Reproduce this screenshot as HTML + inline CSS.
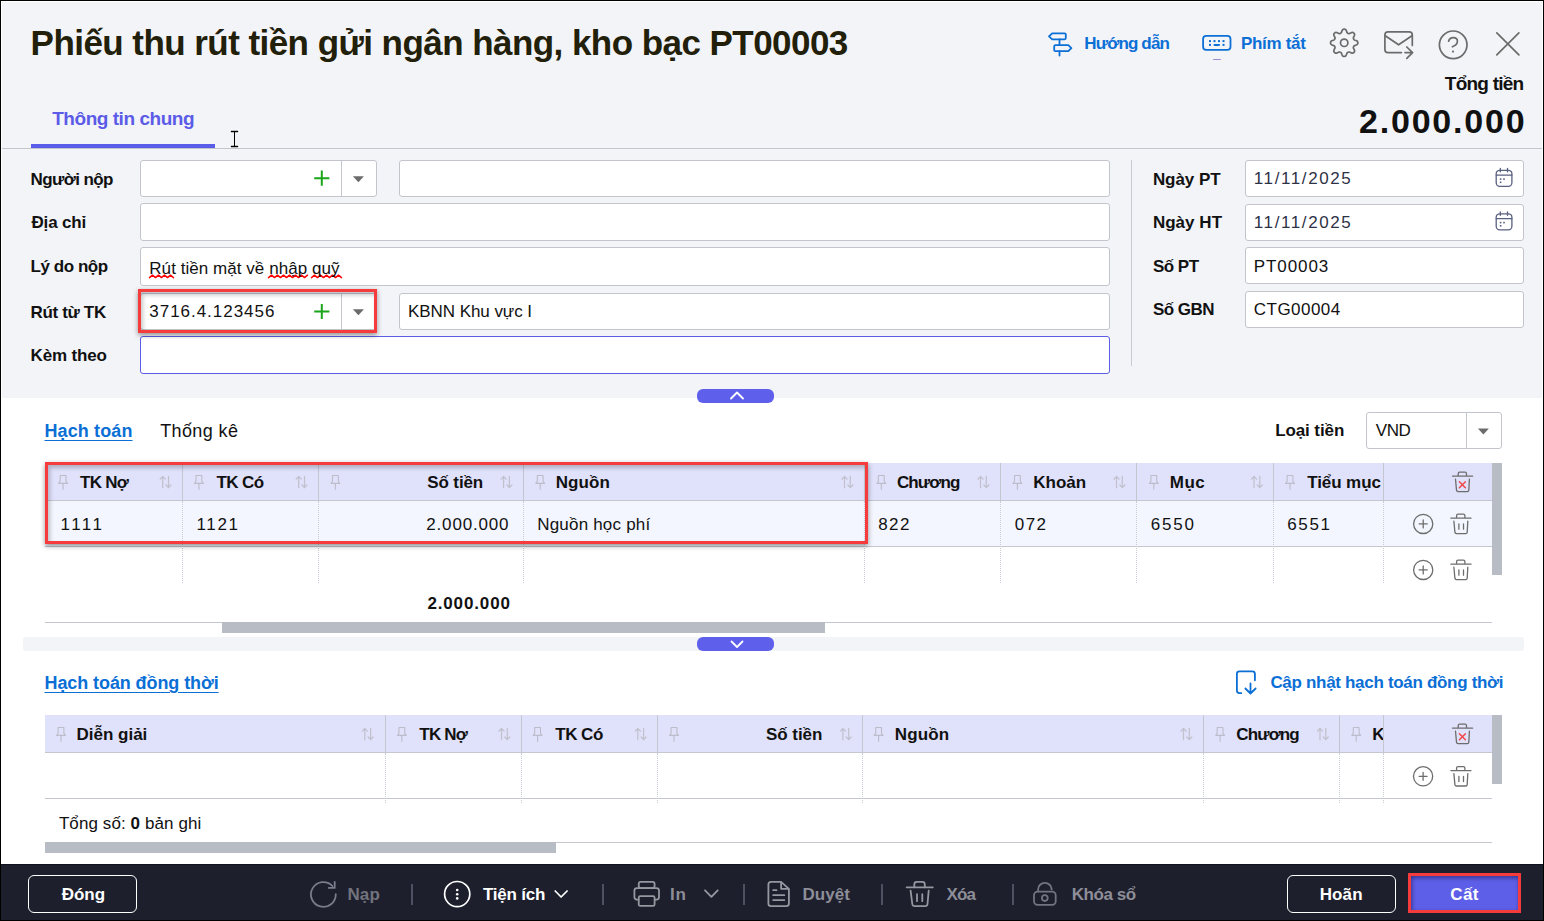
<!DOCTYPE html>
<html lang="vi"><head><meta charset="utf-8"><title>Phiếu thu</title>
<style>
*{box-sizing:border-box;margin:0;padding:0}
html,body{width:1544px;height:921px;overflow:hidden;background:#000;font-family:"Liberation Sans",sans-serif;color:#111}
.a{position:absolute}
.t{position:absolute;white-space:nowrap}
.inp{position:absolute;background:#fff;border:1px solid #c3c5cd;border-radius:3px}
.hl{position:absolute;height:1px;background:#c4c7d0}
.vl{position:absolute;width:1px;background:#c4c7d0}
.dl{position:absolute;width:0;border-left:1px dotted #c9ccd4}
svg{position:absolute;left:0;top:0;overflow:visible}
</style></head><body>
<div class="a" style="left:1px;top:1px;width:1542px;height:919px;background:#fff"></div>
<div class="a" style="left:2px;top:2px;width:1540px;height:396px;background:#f3f4f8"></div>
<!-- tab line -->
<div class="hl" style="left:2px;top:148px;width:1540px;background:#c5c7cf"></div>
<div class="a" style="left:31px;top:144px;width:184px;height:4px;background:#5b5ce8"></div>

<!-- form inputs left -->
<div class="inp" style="left:140px;top:160px;width:237px;height:37px"></div>
<div class="vl" style="left:341px;top:161px;height:35px"></div>
<div class="inp" style="left:399px;top:160px;width:711px;height:37px"></div>
<div class="inp" style="left:140px;top:203px;width:970px;height:38px"></div>
<div class="inp" style="left:140px;top:247px;width:970px;height:39px"></div>
<div class="inp" style="left:140px;top:293px;width:237px;height:37px"></div>
<div class="vl" style="left:341px;top:294px;height:35px"></div>
<div class="inp" style="left:399px;top:293px;width:711px;height:37px"></div>
<div class="inp" style="left:140px;top:336px;width:970px;height:38px;border-color:#5b5ce8"></div>
<div class="a" style="left:138px;top:289px;width:239px;height:44px;border:3px solid #f53b3b;box-shadow:0 2px 5px rgba(0,0,0,.42),inset 2px 3px 4px rgba(0,0,0,.22)"></div>
<!-- right column -->
<div class="vl" style="left:1131px;top:160px;height:206px;background:#c9cbd2"></div>
<div class="inp" style="left:1245px;top:160px;width:279px;height:37px"></div>
<div class="inp" style="left:1245px;top:204px;width:279px;height:37px"></div>
<div class="inp" style="left:1245px;top:247px;width:279px;height:37px"></div>
<div class="inp" style="left:1245px;top:291px;width:279px;height:37px"></div>

<!-- collapse buttons -->
<div class="a" style="left:697px;top:389px;width:77px;height:14px;border-radius:6px;background:#5e60ec"></div>
<div class="a" style="left:23px;top:637px;width:1501px;height:14px;border-radius:3px;background:#f3f4f8"></div>
<div class="a" style="left:697px;top:637px;width:77px;height:14px;border-radius:6px;background:#5e60ec"></div>

<!-- loai tien select -->
<div class="inp" style="left:1366px;top:412px;width:136px;height:37px"></div>
<div class="vl" style="left:1466px;top:413px;height:35px"></div>

<!-- table 1 -->
<div class="a" style="left:45px;top:463px;width:1447px;height:37px;background:#e0e1fb"></div>
<div class="hl" style="left:45px;top:500px;width:1447px"></div>
<div class="a" style="left:45px;top:501px;width:1447px;height:45px;background:#f3f6fe"></div>
<div class="hl" style="left:45px;top:546px;width:1447px"></div>
<div class="vl" style="left:182px;top:463px;height:37px"></div>
<div class="dl" style="left:182px;top:501px;height:82px"></div>
<div class="vl" style="left:318px;top:463px;height:37px"></div>
<div class="dl" style="left:318px;top:501px;height:82px"></div>
<div class="vl" style="left:523px;top:463px;height:37px"></div>
<div class="dl" style="left:523px;top:501px;height:82px"></div>
<div class="vl" style="left:864px;top:463px;height:37px"></div>
<div class="dl" style="left:864px;top:501px;height:82px"></div>
<div class="vl" style="left:1000px;top:463px;height:37px"></div>
<div class="dl" style="left:1000px;top:501px;height:82px"></div>
<div class="vl" style="left:1136px;top:463px;height:37px"></div>
<div class="dl" style="left:1136px;top:501px;height:82px"></div>
<div class="vl" style="left:1273px;top:463px;height:37px"></div>
<div class="dl" style="left:1273px;top:501px;height:82px"></div>
<div class="vl" style="left:1383px;top:463px;height:37px"></div>
<div class="dl" style="left:1383px;top:501px;height:82px"></div>
<div class="hl" style="left:45px;top:622px;width:1447px"></div>
<div class="a" style="left:222px;top:622px;width:603px;height:11px;background:#b8bcc5"></div>
<div class="a" style="left:1492px;top:463px;width:10px;height:112px;background:#b8bcc5"></div>
<div class="a" style="left:45px;top:462px;width:823px;height:82px;border:3px solid #f53b3b;box-shadow:0 2px 5px rgba(0,0,0,.42),inset 2px 3px 4px rgba(0,0,0,.22)"></div>

<!-- table 2 -->
<div class="a" style="left:45px;top:715px;width:1447px;height:37px;background:#e0e1fb"></div>
<div class="hl" style="left:45px;top:752px;width:1447px"></div>
<div class="hl" style="left:45px;top:798px;width:1447px"></div>
<div class="vl" style="left:385px;top:715px;height:37px"></div>
<div class="dl" style="left:385px;top:753px;height:50px"></div>
<div class="vl" style="left:521px;top:715px;height:37px"></div>
<div class="dl" style="left:521px;top:753px;height:50px"></div>
<div class="vl" style="left:657px;top:715px;height:37px"></div>
<div class="dl" style="left:657px;top:753px;height:50px"></div>
<div class="vl" style="left:862px;top:715px;height:37px"></div>
<div class="dl" style="left:862px;top:753px;height:50px"></div>
<div class="vl" style="left:1203px;top:715px;height:37px"></div>
<div class="dl" style="left:1203px;top:753px;height:50px"></div>
<div class="vl" style="left:1339px;top:715px;height:37px"></div>
<div class="dl" style="left:1339px;top:753px;height:50px"></div>
<div class="vl" style="left:1383px;top:715px;height:37px"></div>
<div class="dl" style="left:1383px;top:753px;height:50px"></div>
<div class="a" style="left:1492px;top:715px;width:10px;height:69px;background:#b8bcc5"></div>
<div class="hl" style="left:45px;top:842px;width:1447px"></div>
<div class="a" style="left:45px;top:842px;width:511px;height:11px;background:#b8bcc5"></div>

<!-- footer -->
<div class="a" style="left:1px;top:864px;width:1542px;height:1px;background:#10121c;z-index:1"></div>
<div class="a" style="left:1px;top:864px;width:1542px;height:56px;background:#1d1f2d"></div>
<div class="a" style="left:28px;top:875px;width:109px;height:38px;border:1.5px solid #fff;border-radius:6px"></div>
<div class="a" style="left:1287px;top:875px;width:109px;height:38px;border:1.5px solid #fff;border-radius:6px"></div>
<div class="a" style="left:1408px;top:873px;width:113px;height:40px;border:3px solid #f53b3b;background:#5e5fe8;box-shadow:inset 1px 2px 4px rgba(0,0,30,.45)"></div>
<div class="a" style="left:411px;top:884px;width:2px;height:21px;background:#4f5162"></div>
<div class="a" style="left:602px;top:884px;width:2px;height:21px;background:#4f5162"></div>
<div class="a" style="left:743px;top:884px;width:2px;height:21px;background:#4f5162"></div>
<div class="a" style="left:881px;top:884px;width:2px;height:21px;background:#4f5162"></div>
<div class="a" style="left:1012px;top:884px;width:2px;height:21px;background:#4f5162"></div>

<svg width="1544" height="921" viewBox="0 0 1544 921" fill="none" stroke-linecap="round" stroke-linejoin="round">
 <!-- signpost -->
 <g stroke="#0b6fd6" stroke-width="1.8">
  <path d="M1049,36.4 L1052.2,33.3 H1064.6 Q1065.8,33.3 1065.8,34.5 V38.1 Q1065.8,39.3 1064.6,39.3 H1052.2 Z"/>
  <path d="M1059.5,39.5 V45"/>
  <path d="M1055.4,45.2 H1068.3 L1071.4,48.1 L1068.3,51.1 H1055.4 Q1054.2,51.1 1054.2,49.9 V46.4 Q1054.2,45.2 1055.4,45.2 Z"/>
  <path d="M1059.5,51.2 V55.5"/>
  <rect x="1203.1" y="35.8" width="27.4" height="14.1" rx="3.2"/>
 </g>
 <g fill="#0b6fd6">
  <rect x="1209" y="40.1" width="2" height="2"/><rect x="1213.5" y="40.1" width="2" height="2"/><rect x="1218" y="40.1" width="2" height="2"/><rect x="1222.5" y="40.1" width="2" height="2"/>
  <rect x="1209" y="43.9" width="2" height="2"/><rect x="1213.5" y="43.9" width="6.5" height="2" rx="0.8"/><rect x="1222.5" y="43.9" width="2" height="2"/>
 </g>
 <path d="M1213.5,59.5 H1220.5" stroke="#8a70c0" stroke-width="1" opacity=".8"/>
 <!-- gear, mail, help, close -->
 <g stroke="#6b6b6b" stroke-width="1.7">
  <path d="M1344.2,29.1 L1344.7,29.2 L1345.3,29.4 L1345.8,29.7 L1346.2,30.3 L1346.5,31.1 L1346.8,32.0 L1347.1,32.6 L1347.4,33.0 L1347.7,33.2 L1348.1,33.4 L1348.5,33.6 L1348.9,33.6 L1349.4,33.6 L1350.0,33.3 L1350.8,32.9 L1351.6,32.5 L1352.4,32.4 L1353.0,32.5 L1353.4,32.8 L1353.9,33.1 L1354.2,33.6 L1354.5,34.0 L1354.6,34.6 L1354.5,35.4 L1354.1,36.2 L1353.7,37.0 L1353.4,37.6 L1353.4,38.1 L1353.4,38.5 L1353.6,38.9 L1353.8,39.3 L1354.0,39.6 L1354.4,39.9 L1355.0,40.2 L1355.9,40.5 L1356.7,40.8 L1357.3,41.2 L1357.6,41.7 L1357.8,42.3 L1357.9,42.8 L1357.8,43.3 L1357.6,43.9 L1357.3,44.4 L1356.7,44.8 L1355.9,45.1 L1355.0,45.4 L1354.4,45.7 L1354.0,46.0 L1353.8,46.3 L1353.6,46.7 L1353.4,47.1 L1353.4,47.5 L1353.4,48.0 L1353.7,48.6 L1354.1,49.4 L1354.5,50.2 L1354.6,51.0 L1354.5,51.6 L1354.2,52.0 L1353.9,52.5 L1353.4,52.8 L1353.0,53.1 L1352.4,53.2 L1351.6,53.1 L1350.8,52.7 L1350.0,52.3 L1349.4,52.0 L1348.9,52.0 L1348.5,52.0 L1348.1,52.2 L1347.7,52.4 L1347.4,52.6 L1347.1,53.0 L1346.8,53.6 L1346.5,54.5 L1346.2,55.3 L1345.8,55.9 L1345.3,56.2 L1344.7,56.4 L1344.2,56.4 L1343.7,56.4 L1343.1,56.2 L1342.6,55.9 L1342.2,55.3 L1341.9,54.5 L1341.6,53.6 L1341.3,53.0 L1341.0,52.6 L1340.7,52.4 L1340.3,52.2 L1339.9,52.0 L1339.5,52.0 L1339.0,52.0 L1338.4,52.3 L1337.6,52.7 L1336.8,53.1 L1336.0,53.2 L1335.4,53.1 L1335.0,52.8 L1334.5,52.5 L1334.2,52.0 L1333.9,51.6 L1333.8,51.0 L1333.9,50.2 L1334.3,49.4 L1334.7,48.6 L1335.0,48.0 L1335.0,47.5 L1335.0,47.1 L1334.8,46.7 L1334.6,46.3 L1334.4,46.0 L1334.0,45.7 L1333.4,45.4 L1332.5,45.1 L1331.7,44.8 L1331.1,44.4 L1330.8,43.9 L1330.6,43.3 L1330.5,42.8 L1330.6,42.3 L1330.8,41.7 L1331.1,41.2 L1331.7,40.8 L1332.5,40.5 L1333.4,40.2 L1334.0,39.9 L1334.4,39.6 L1334.6,39.3 L1334.8,38.9 L1335.0,38.5 L1335.0,38.1 L1335.0,37.6 L1334.7,37.0 L1334.3,36.2 L1333.9,35.4 L1333.8,34.6 L1333.9,34.0 L1334.2,33.6 L1334.5,33.1 L1335.0,32.8 L1335.4,32.5 L1336.0,32.4 L1336.8,32.5 L1337.6,32.9 L1338.4,33.3 L1339.0,33.6 L1339.5,33.6 L1339.9,33.6 L1340.3,33.4 L1340.7,33.2 L1341.0,33.0 L1341.3,32.6 L1341.6,32.0 L1341.9,31.1 L1342.2,30.3 L1342.6,29.7 L1343.1,29.4 L1343.7,29.2Z"/>
  <circle cx="1344.2" cy="42.8" r="3.7"/>
  <path d="M1401.4,52.6 H1388 Q1384.9,52.6 1384.9,49.5 V35 Q1384.9,31.9 1388,31.9 H1409.2 Q1412.3,31.9 1412.3,35 V45.5"/>
  <path d="M1385.6,36 L1398.6,44.8 L1411.6,36"/>
  <path d="M1405,52.6 H1412.6 M1406.8,47 L1412.6,52.6 L1406.8,58.3"/>
  <circle cx="1453.2" cy="44.8" r="13.8"/>
  <path d="M1448.6,41.2 Q1449.6,37.6 1453.4,37.6 Q1457.4,37.6 1457.4,41.3 Q1457.4,44.9 1452.4,46.8" />
  <path d="M1496.8,32.8 L1518.9,54.9 M1518.9,32.8 L1496.8,54.9"/>
 </g>
 <circle cx="1453" cy="51.6" r="1.1" fill="#6b6b6b"/>
 <!-- combo plus & triangles -->
 <g stroke="#1ba51b" stroke-width="2" stroke-linecap="butt">
  <path d="M314.2,178.2 H329.4 M321.8,170.6 V185.8"/>
  <path d="M314.2,311.5 H329.4 M321.8,303.9 V319.1"/>
 </g>
 <g fill="#6b6b6b">
  <path d="M352.9,176.3 H363.9 L358.4,182.3 Z"/>
  <path d="M352.9,309.3 H363.9 L358.4,315.3 Z"/>
  <path d="M1477.9,428.5 H1488.9 L1483.4,434.5 Z"/>
 </g>
 <!-- calendars -->
 <g stroke="#5a6080" stroke-width="1.3">
  <rect x="1496.2" y="170.3" width="15.7" height="16" rx="3.5"/>
  <path d="M1496.2,175.1 H1511.9 M1500.3,168.3 V171.8 M1507.5,168.3 V171.8"/>
  <rect x="1496.2" y="213.8" width="15.7" height="16" rx="3.5"/>
  <path d="M1496.2,218.6 H1511.9 M1500.3,211.8 V215.3 M1507.5,211.8 V215.3"/>
 </g>
 <g fill="#5a6080">
  <rect x="1499.8" y="178.3" width="1.6" height="1.6"/><rect x="1503.2" y="178.3" width="1.6" height="1.6"/><rect x="1499.8" y="181.5" width="1.6" height="1.6"/>
  <rect x="1499.8" y="221.8" width="1.6" height="1.6"/><rect x="1503.2" y="221.8" width="1.6" height="1.6"/><rect x="1499.8" y="225" width="1.6" height="1.6"/>
 </g>
 <!-- chevrons -->
 <g stroke="#fff" stroke-width="1.8">
  <path d="M731,398.5 L737,392.5 L743,398.5"/>
  <path d="M731.5,641.5 L737,647 L742.5,641.5"/>
 </g>
 <g stroke="#bcbdc9" stroke-width="1.1">
<path d="M58.7,483.4 H67.5 L66.0,481.2 V475.5 H60.2 V481.2 Z M63.1,483.4 V489.3"/>
<path d="M194.5,483.4 H203.3 L201.8,481.2 V475.5 H196.0 V481.2 Z M198.9,483.4 V489.3"/>
<path d="M331.0,483.4 H339.8 L338.3,481.2 V475.5 H332.5 V481.2 Z M335.4,483.4 V489.3"/>
<path d="M535.8,483.4 H544.6 L543.1,481.2 V475.5 H537.3 V481.2 Z M540.2,483.4 V489.3"/>
<path d="M876.9,483.4 H885.7 L884.2,481.2 V475.5 H878.4 V481.2 Z M881.3,483.4 V489.3"/>
<path d="M1013.0,483.4 H1021.8 L1020.3,481.2 V475.5 H1014.5 V481.2 Z M1017.4,483.4 V489.3"/>
<path d="M1149.4,483.4 H1158.2 L1156.7,481.2 V475.5 H1150.9 V481.2 Z M1153.8,483.4 V489.3"/>
<path d="M1285.6,483.4 H1294.4 L1292.9,481.2 V475.5 H1287.1 V481.2 Z M1290.0,483.4 V489.3"/>
</g><g stroke="#c0c1cc" stroke-width="1.2">
<path d="M162.7,476.5 V487.7 M160.2,479.2 L162.7,476.5 L165.3,479.2 M168.5,476.3 V487.7 M166.0,485.0 L168.5,487.7 L171.0,485.0"/>
<path d="M298.7,476.5 V487.7 M296.2,479.2 L298.7,476.5 L301.3,479.2 M304.5,476.3 V487.7 M302.0,485.0 L304.5,487.7 L307.0,485.0"/>
<path d="M503.6,476.5 V487.7 M501.1,479.2 L503.6,476.5 L506.2,479.2 M509.4,476.3 V487.7 M506.9,485.0 L509.4,487.7 L511.9,485.0"/>
<path d="M844.5,476.5 V487.7 M842.0,479.2 L844.5,476.5 L847.1,479.2 M850.3,476.3 V487.7 M847.8,485.0 L850.3,487.7 L852.8,485.0"/>
<path d="M980.5,476.5 V487.7 M978.0,479.2 L980.5,476.5 L983.1,479.2 M986.3,476.3 V487.7 M983.8,485.0 L986.3,487.7 L988.8,485.0"/>
<path d="M1116.5,476.5 V487.7 M1114.0,479.2 L1116.5,476.5 L1119.1,479.2 M1122.3,476.3 V487.7 M1119.8,485.0 L1122.3,487.7 L1124.8,485.0"/>
<path d="M1254.0,476.5 V487.7 M1251.5,479.2 L1254.0,476.5 L1256.6,479.2 M1259.8,476.3 V487.7 M1257.3,485.0 L1259.8,487.7 L1262.3,485.0"/>
</g>
<g stroke="#6d6d6d" stroke-width="1.3"><path d="M1452.5,476.2 H1472.6 M1458.2,476.2 V473.7 Q1458.2,472.2 1459.7,472.2 H1465.0 Q1466.5,472.2 1466.5,473.7 V476.2 M1455.5,479.2 L1456.5,490.2 Q1456.7,491.6 1458.1,491.6 H1467.3 Q1468.7,491.6 1468.8,490.2 L1469.4,479.2"/></g><path stroke="#f04848" stroke-width="1.5" d="M1459.4,481.7 L1465.4,487.7 M1465.4,481.7 L1459.4,487.7"/>
<g stroke="#6d6d6d" stroke-width="1.3"><circle cx="1423.2" cy="523.9" r="9.6"/><path d="M1419.2,523.9 H1427.2 M1423.2,519.9 V527.9"/></g>
<g stroke="#6d6d6d" stroke-width="1.3"><path d="M1450.9,518.2 H1471.0 M1456.6,518.2 V515.7 Q1456.6,514.2 1458.1,514.2 H1463.4 Q1464.9,514.2 1464.9,515.7 V518.2 M1453.9,521.2 L1454.9,532.2 Q1455.1,533.6 1456.5,533.6 H1465.7 Q1467.1,533.6 1467.2,532.2 L1467.8,521.2"/></g><path stroke="#6d6d6d" stroke-width="1.3" d="M1458.9,523.9 V529.2 M1463.5,523.9 V529.2"/>
<g stroke="#6d6d6d" stroke-width="1.3"><circle cx="1423.2" cy="569.9" r="9.6"/><path d="M1419.2,569.9 H1427.2 M1423.2,565.9 V573.9"/></g>
<g stroke="#6d6d6d" stroke-width="1.3"><path d="M1450.9,564.2 H1471.0 M1456.6,564.2 V561.7 Q1456.6,560.2 1458.1,560.2 H1463.4 Q1464.9,560.2 1464.9,561.7 V564.2 M1453.9,567.2 L1454.9,578.2 Q1455.1,579.6 1456.5,579.6 H1465.7 Q1467.1,579.6 1467.2,578.2 L1467.8,567.2"/></g><path stroke="#6d6d6d" stroke-width="1.3" d="M1458.9,569.9 V575.2 M1463.5,569.9 V575.2"/>
 <g stroke="#bcbdc9" stroke-width="1.1">
<path d="M56.6,735.4 H65.4 L63.9,733.2 V727.5 H58.1 V733.2 Z M61.0,735.4 V741.3"/>
<path d="M397.4,735.4 H406.2 L404.7,733.2 V727.5 H398.9 V733.2 Z M401.8,735.4 V741.3"/>
<path d="M533.2,735.4 H542.0 L540.5,733.2 V727.5 H534.7 V733.2 Z M537.6,735.4 V741.3"/>
<path d="M669.6,735.4 H678.4 L676.9,733.2 V727.5 H671.1 V733.2 Z M674.0,735.4 V741.3"/>
<path d="M874.2,735.4 H883.0 L881.5,733.2 V727.5 H875.7 V733.2 Z M878.6,735.4 V741.3"/>
<path d="M1215.7,735.4 H1224.5 L1223.0,733.2 V727.5 H1217.2 V733.2 Z M1220.1,735.4 V741.3"/>
<path d="M1351.8,735.4 H1360.6 L1359.1,733.2 V727.5 H1353.3 V733.2 Z M1356.2,735.4 V741.3"/>
</g><g stroke="#c0c1cc" stroke-width="1.2">
<path d="M364.8,728.5 V739.7 M362.3,731.2 L364.8,728.5 L367.4,731.2 M370.6,728.3 V739.7 M368.1,737.0 L370.6,739.7 L373.1,737.0"/>
<path d="M501.5,728.5 V739.7 M499.0,731.2 L501.5,728.5 L504.1,731.2 M507.3,728.3 V739.7 M504.8,737.0 L507.3,739.7 L509.8,737.0"/>
<path d="M637.8,728.5 V739.7 M635.3,731.2 L637.8,728.5 L640.4,731.2 M643.6,728.3 V739.7 M641.1,737.0 L643.6,739.7 L646.1,737.0"/>
<path d="M842.9,728.5 V739.7 M840.4,731.2 L842.9,728.5 L845.5,731.2 M848.7,728.3 V739.7 M846.2,737.0 L848.7,739.7 L851.2,737.0"/>
<path d="M1183.5,728.5 V739.7 M1181.0,731.2 L1183.5,728.5 L1186.1,731.2 M1189.3,728.3 V739.7 M1186.8,737.0 L1189.3,739.7 L1191.8,737.0"/>
<path d="M1320.0,728.5 V739.7 M1317.5,731.2 L1320.0,728.5 L1322.6,731.2 M1325.8,728.3 V739.7 M1323.3,737.0 L1325.8,739.7 L1328.3,737.0"/>
</g>
<g stroke="#6d6d6d" stroke-width="1.3"><path d="M1452.5,728.2 H1472.6 M1458.2,728.2 V725.7 Q1458.2,724.2 1459.7,724.2 H1465.0 Q1466.5,724.2 1466.5,725.7 V728.2 M1455.5,731.2 L1456.5,742.2 Q1456.7,743.6 1458.1,743.6 H1467.3 Q1468.7,743.6 1468.8,742.2 L1469.4,731.2"/></g><path stroke="#f04848" stroke-width="1.5" d="M1459.4,733.7 L1465.4,739.7 M1465.4,733.7 L1459.4,739.7"/>
<g stroke="#6d6d6d" stroke-width="1.3"><circle cx="1423.1" cy="776.3" r="9.6"/><path d="M1419.1,776.3 H1427.1 M1423.1,772.3 V780.3"/></g>
<g stroke="#6d6d6d" stroke-width="1.3"><path d="M1450.9,770.6 H1471.0 M1456.6,770.6 V768.1 Q1456.6,766.6 1458.1,766.6 H1463.4 Q1464.9,766.6 1464.9,768.1 V770.6 M1453.9,773.6 L1454.9,784.6 Q1455.1,786.0 1456.5,786.0 H1465.7 Q1467.1,786.0 1467.2,784.6 L1467.8,773.6"/></g><path stroke="#6d6d6d" stroke-width="1.3" d="M1458.9,776.3 V781.6 M1463.5,776.3 V781.6"/>
 <!-- cap nhat icon -->
 <g stroke="#0b6fd6" stroke-width="1.8">
  <path d="M1241.3,693.1 H1239.4 Q1236.9,693.1 1236.9,690.6 V673.8 Q1236.9,671.3 1239.4,671.3 H1252.4 Q1254.9,671.3 1254.9,673.8 V680.3"/>
  <path d="M1250.5,683.4 V693.3 M1245.4,688.5 L1250.5,693.5 L1255.6,688.5"/>
 </g>
 <!-- footer icons -->
 <g stroke="#7a7c8a" stroke-width="1.8">
  <path d="M335.75,894.2 A12.4,12.4 0 1 1 332.4,886"/>
  <path d="M334.7,881.8 V887.9 H328.8"/>
 </g>
 <g stroke="#fff" stroke-width="1.7">
  <circle cx="457.2" cy="894.1" r="12.6"/>
  <path d="M555.2,891 L561.1,897 L567.1,891"/>
 </g>
 <g fill="#fff"><circle cx="457.2" cy="890" r="1.3"/><circle cx="457.2" cy="894.2" r="1.3"/><circle cx="457.2" cy="898.4" r="1.3"/></g>
 <g stroke="#96979f" stroke-width="1.8">
  <rect x="638.75" y="881.9" width="15.85" height="6.2" rx="2"/>
  <path d="M638.5,899.6 H636.9 Q634.4,899.6 634.4,897.1 V890.6 Q634.4,888.1 636.9,888.1 H656.5 Q659,888.1 659,890.6 V897.1 Q659,899.6 656.5,899.6 H654.8"/>
  <rect x="638.75" y="896.2" width="15.85" height="9.7" rx="1.5"/>
  <path d="M705,890.3 L711.4,896.9 L717.7,890.3"/>
  <path d="M781.1,881.9 H771 Q768.4,881.9 768.4,884.5 V903.5 Q768.4,906.1 771,906.1 H786.3 Q788.9,906.1 788.9,903.5 V888.8 Z M781.1,881.9 V888.8 H788.9"/>
  <path d="M773.2,890.2 H776.5 M773.2,895.2 H784.3 M773.2,900.2 H784.3"/>
  <path d="M906.6,887.3 H932.8"/>
  <path d="M914.3,887.3 V884.4 Q914.3,881.9 916.8,881.9 H922.3 Q924.8,881.9 924.8,884.4 V887.3"/>
  <path d="M910.6,890.7 L912.3,904 Q912.6,906.1 914.7,906.1 H925.2 Q927.3,906.1 927.5,904 L928.7,890.7"/>
  <path d="M917,894.2 V901.2 M922.3,894.2 V901.2"/>
 </g>
 <g stroke="#72747f" stroke-width="1.8">
  <rect x="1034" y="891.6" width="21.7" height="13.3" rx="3.6"/>
  <path d="M1038.1,891.4 V889.4 A6.75,6.6 0 0 1 1051.6,889.4 V888.5"/>
  <circle cx="1044.8" cy="898.1" r="2.9"/>
 </g>

 <!-- spell squiggles -->
 <g stroke="#f00" stroke-width="1.5" stroke-linecap="round" stroke-linejoin="round">
  <path d="M149.5,277.6 l3,-2.4 l3,2.4 l3,-2.4 l3,2.4 l3,-2.4 l3,2.4 l3,-2.4 l3,2.4"/>
  <path d="M268.5,277.6 l3,-2.4 l3,2.4 l3,-2.4 l3,2.4 l3,-2.4 l3,2.4 l3,-2.4 l3,2.4 l3,-2.4 l3,2.4 l3,-2.4 l3,2.4 l3,-2.4"/>
  <path d="M311.5,277.6 l3,-2.4 l3,2.4 l3,-2.4 l3,2.4 l3,-2.4 l3,2.4 l3,-2.4 l3,2.4 l3,-2.4 l3,2.4"/>
 </g>
 <!-- I-beam cursor -->
 <g stroke="#fff" stroke-width="3" stroke-linecap="square"><path d="M231,131.5 H238 M234.5,131.5 V146.5 M231,146.5 H238"/></g>
 <g stroke="#000" stroke-width="1.3" stroke-linecap="butt"><path d="M230.8,131.5 H238.2 M230.8,146.5 H238.2"/><path d="M234.5,131.5 V146.5" stroke-width="1.1"/></g>
</svg>
<div class="t" style="left:30.6px;top:25px;font-size:35px;line-height:35px;font-weight:700;color:#22200a;letter-spacing:-0.55px;">Phiếu thu rút tiền gửi ngân hàng, kho bạc PT00003</div>
<div class="t" style="left:1084.3px;top:35px;font-size:17px;line-height:17px;font-weight:700;color:#0b6fd6;letter-spacing:-0.85px;">Hướng dẫn</div>
<div class="t" style="left:1241.0px;top:35px;font-size:17px;line-height:17px;font-weight:700;color:#0b6fd6;letter-spacing:-0.31px;">Phím tắt</div>
<div class="t" style="left:1444.8px;top:74px;font-size:19px;line-height:19px;font-weight:700;color:#111;letter-spacing:-0.76px;">Tổng tiền</div>
<div class="t" style="left:1359.0px;top:104px;font-size:34px;line-height:34px;font-weight:700;color:#111;letter-spacing:1.79px;">2.000.000</div>
<div class="t" style="left:52.2px;top:109px;font-size:19px;line-height:19px;font-weight:700;color:#5b5be8;letter-spacing:-0.46px;">Thông tin chung</div>
<div class="t" style="left:30.6px;top:171px;font-size:17px;line-height:17px;font-weight:700;color:#111;letter-spacing:-0.60px;">Người nộp</div>
<div class="t" style="left:31.5px;top:214px;font-size:17px;line-height:17px;font-weight:700;color:#111;letter-spacing:-0.17px;">Địa chỉ</div>
<div class="t" style="left:30.5px;top:258px;font-size:17px;line-height:17px;font-weight:700;color:#111;letter-spacing:-0.44px;">Lý do nộp</div>
<div class="t" style="left:30.5px;top:304px;font-size:17px;line-height:17px;font-weight:700;color:#111;letter-spacing:-0.34px;">Rút từ TK</div>
<div class="t" style="left:30.5px;top:347px;font-size:17px;line-height:17px;font-weight:700;color:#111;letter-spacing:-0.14px;">Kèm theo</div>
<div class="t" style="left:149.3px;top:260px;font-size:17px;line-height:17px;font-weight:400;color:#111;letter-spacing:0.05px;">Rút tiền mặt về nhập quỹ</div>
<div class="t" style="left:149.3px;top:303px;font-size:17px;line-height:17px;font-weight:400;color:#111;letter-spacing:0.97px;">3716.4.123456</div>
<div class="t" style="left:408.0px;top:303px;font-size:17px;line-height:17px;font-weight:400;color:#111;letter-spacing:-0.06px;">KBNN Khu vực I</div>
<div class="t" style="left:1152.9px;top:171px;font-size:17px;line-height:17px;font-weight:700;color:#111;letter-spacing:-0.05px;">Ngày PT</div>
<div class="t" style="left:1152.9px;top:214px;font-size:17px;line-height:17px;font-weight:700;color:#111;letter-spacing:0.03px;">Ngày HT</div>
<div class="t" style="left:1152.9px;top:258px;font-size:17px;line-height:17px;font-weight:700;color:#111;letter-spacing:-0.50px;">Số PT</div>
<div class="t" style="left:1152.9px;top:301px;font-size:17px;line-height:17px;font-weight:700;color:#111;letter-spacing:-0.52px;">Số GBN</div>
<div class="t" style="left:1253.8px;top:170px;font-size:17px;line-height:17px;font-weight:400;color:#2e3247;letter-spacing:1.60px;">11/11/2025</div>
<div class="t" style="left:1253.8px;top:214px;font-size:17px;line-height:17px;font-weight:400;color:#2e3247;letter-spacing:1.60px;">11/11/2025</div>
<div class="t" style="left:1253.8px;top:258px;font-size:17px;line-height:17px;font-weight:400;color:#111;letter-spacing:0.90px;">PT00003</div>
<div class="t" style="left:1253.8px;top:301px;font-size:17px;line-height:17px;font-weight:400;color:#111;letter-spacing:0.47px;">CTG00004</div>
<div class="t" style="left:44.5px;top:422px;font-size:18px;line-height:18px;font-weight:700;color:#0b6fd6;letter-spacing:0.11px;text-decoration:underline;text-underline-offset:3px;">Hạch toán</div>
<div class="t" style="left:160.2px;top:422px;font-size:18px;line-height:18px;font-weight:400;color:#111;letter-spacing:0.39px;">Thống kê</div>
<div class="t" style="left:1275.2px;top:422px;font-size:17px;line-height:17px;font-weight:700;color:#111;letter-spacing:-0.10px;">Loại tiền</div>
<div class="t" style="left:1375.8px;top:422px;font-size:17px;line-height:17px;font-weight:400;color:#111;letter-spacing:-0.50px;">VND</div>
<div class="t" style="left:80.1px;top:474px;font-size:17px;line-height:17px;font-weight:700;color:#111;letter-spacing:-0.75px;">TK Nợ</div>
<div class="t" style="left:216.5px;top:474px;font-size:17px;line-height:17px;font-weight:700;color:#111;letter-spacing:-0.60px;">TK Có</div>
<div class="t" style="left:427.2px;top:474px;font-size:17px;line-height:17px;font-weight:700;color:#111;letter-spacing:-0.10px;">Số tiền</div>
<div class="t" style="left:555.7px;top:474px;font-size:17px;line-height:17px;font-weight:700;color:#111;letter-spacing:0.10px;">Nguồn</div>
<div class="t" style="left:896.9px;top:474px;font-size:17px;line-height:17px;font-weight:700;color:#111;letter-spacing:-0.88px;">Chương</div>
<div class="t" style="left:1033.3px;top:474px;font-size:17px;line-height:17px;font-weight:700;color:#111;letter-spacing:-0.02px;">Khoản</div>
<div class="t" style="left:1169.8px;top:474px;font-size:17px;line-height:17px;font-weight:700;color:#111;letter-spacing:0.50px;">Mục</div>
<div class="t" style="left:1307.2px;top:474px;font-size:17px;line-height:17px;font-weight:700;color:#111;letter-spacing:-0.09px;">Tiểu mục</div>
<div class="t" style="left:60.5px;top:516px;font-size:17px;line-height:17px;font-weight:400;color:#111;letter-spacing:2.47px;">1111</div>
<div class="t" style="left:196.5px;top:516px;font-size:17px;line-height:17px;font-weight:400;color:#111;letter-spacing:1.67px;">1121</div>
<div class="t" style="left:426.3px;top:516px;font-size:17px;line-height:17px;font-weight:400;color:#111;letter-spacing:0.82px;">2.000.000</div>
<div class="t" style="left:537.2px;top:516px;font-size:17px;line-height:17px;font-weight:400;color:#111;letter-spacing:0.20px;">Nguồn học phí</div>
<div class="t" style="left:878.2px;top:516px;font-size:17px;line-height:17px;font-weight:400;color:#111;letter-spacing:1.40px;">822</div>
<div class="t" style="left:1014.8px;top:516px;font-size:17px;line-height:17px;font-weight:400;color:#111;letter-spacing:1.40px;">072</div>
<div class="t" style="left:1150.8px;top:516px;font-size:17px;line-height:17px;font-weight:400;color:#111;letter-spacing:1.77px;">6550</div>
<div class="t" style="left:1287.3px;top:516px;font-size:17px;line-height:17px;font-weight:400;color:#111;letter-spacing:1.60px;">6551</div>
<div class="t" style="left:427.4px;top:595px;font-size:17px;line-height:17px;font-weight:700;color:#111;letter-spacing:0.86px;">2.000.000</div>
<div class="t" style="left:44.5px;top:674px;font-size:18px;line-height:18px;font-weight:700;color:#0b6fd6;letter-spacing:-0.09px;text-decoration:underline;text-underline-offset:3px;">Hạch toán đồng thời</div>
<div class="t" style="left:1270.4px;top:674px;font-size:17px;line-height:17px;font-weight:700;color:#0b6fd6;letter-spacing:-0.31px;">Cập nhật hạch toán đồng thời</div>
<div class="t" style="left:76.5px;top:726px;font-size:17px;line-height:17px;font-weight:700;color:#111;letter-spacing:0.00px;">Diễn giải</div>
<div class="t" style="left:419.3px;top:726px;font-size:17px;line-height:17px;font-weight:700;color:#111;letter-spacing:-0.78px;">TK Nợ</div>
<div class="t" style="left:555.3px;top:726px;font-size:17px;line-height:17px;font-weight:700;color:#111;letter-spacing:-0.52px;">TK Có</div>
<div class="t" style="left:765.9px;top:726px;font-size:17px;line-height:17px;font-weight:700;color:#111;letter-spacing:-0.02px;">Số tiền</div>
<div class="t" style="left:894.8px;top:726px;font-size:17px;line-height:17px;font-weight:700;color:#111;letter-spacing:0.15px;">Nguồn</div>
<div class="t" style="left:1236.3px;top:726px;font-size:17px;line-height:17px;font-weight:700;color:#111;letter-spacing:-0.88px;">Chương</div>
<div class="t" style="left:1372.3px;top:726px;font-size:17px;line-height:17px;font-weight:700;color:#111;letter-spacing:0.00px;width:10.7px;overflow:hidden;">K</div>
<div class="t" style="left:58.9px;top:815px;font-size:17px;line-height:17px;font-weight:400;color:#111;letter-spacing:0.09px;">Tổng số: <b>0</b> bản ghi</div>
<div class="t" style="left:61.7px;top:886px;font-size:17px;line-height:17px;font-weight:700;color:#fff;letter-spacing:-0.03px;">Đóng</div>
<div class="t" style="left:347.4px;top:886px;font-size:17px;line-height:17px;font-weight:700;color:#72737c;letter-spacing:0.15px;">Nạp</div>
<div class="t" style="left:482.9px;top:886px;font-size:17px;line-height:17px;font-weight:700;color:#fff;letter-spacing:-0.20px;">Tiện ích</div>
<div class="t" style="left:670.0px;top:886px;font-size:17px;line-height:17px;font-weight:700;color:#8d8e97;letter-spacing:0.70px;">In</div>
<div class="t" style="left:802.5px;top:886px;font-size:17px;line-height:17px;font-weight:700;color:#8d8e97;letter-spacing:0.05px;">Duyệt</div>
<div class="t" style="left:946.6px;top:886px;font-size:17px;line-height:17px;font-weight:700;color:#8d8e97;letter-spacing:-0.85px;">Xóa</div>
<div class="t" style="left:1071.8px;top:886px;font-size:17px;line-height:17px;font-weight:700;color:#8d8e97;letter-spacing:-0.45px;">Khóa sổ</div>
<div class="t" style="left:1319.7px;top:886px;font-size:17px;line-height:17px;font-weight:700;color:#fff;letter-spacing:0.13px;">Hoãn</div>
<div class="t" style="left:1450.3px;top:886px;font-size:17px;line-height:17px;font-weight:700;color:#fff;letter-spacing:0.35px;">Cất</div>
</body></html>
